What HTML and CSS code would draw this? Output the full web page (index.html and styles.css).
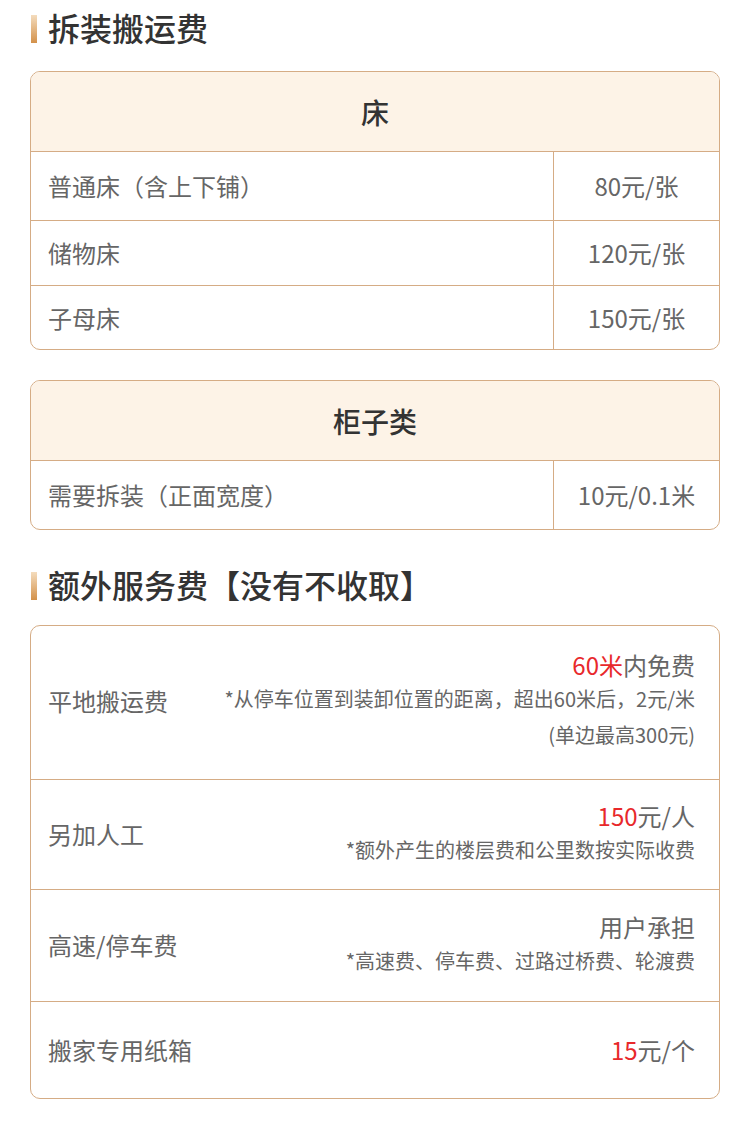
FILE: index.html
```html
<!DOCTYPE html>
<html lang="zh-CN">
<head>
<meta charset="utf-8">
<title>拆装搬运费</title>
<link rel="stylesheet" href="styles.css">
</head>
<body>
<div class="page">
  <h2 class="title title--first"><span class="bar"></span>拆装搬运费</h2>

  <div class="card">
    <div class="card-head">床</div>
    <div class="trow trow--first"><div class="tcell tcell--name">普通床（含上下铺）</div><div class="tcell tcell--price">80元/张</div></div>
    <div class="trow"><div class="tcell tcell--name">储物床</div><div class="tcell tcell--price">120元/张</div></div>
    <div class="trow trow--last"><div class="tcell tcell--name">子母床</div><div class="tcell tcell--price">150元/张</div></div>
  </div>

  <div class="card card--second">
    <div class="card-head">柜子类</div>
    <div class="trow trow--first trow--only"><div class="tcell tcell--name">需要拆装（正面宽度）</div><div class="tcell tcell--price">10元/0.1米</div></div>
  </div>

  <h2 class="title title--second"><span class="bar"></span>额外服务费【没有不收取】</h2>

  <div class="card card--list">
    <div class="srow srow--tall">
      <div class="slabel">平地搬运费</div>
      <div class="sinfo">
        <div class="smain"><span class="red">60米</span>内免费</div>
        <div class="ssub">*从停车位置到装卸位置的距离，超出60米后，2元/米</div>
        <div class="ssub">(单边最高300元)</div>
      </div>
    </div>
    <div class="srow">
      <div class="slabel">另加人工</div>
      <div class="sinfo">
        <div class="smain"><span class="red">150</span>元/人</div>
        <div class="ssub">*额外产生的楼层费和公里数按实际收费</div>
      </div>
    </div>
    <div class="srow srow--third">
      <div class="slabel">高速/停车费</div>
      <div class="sinfo">
        <div class="smain">用户承担</div>
        <div class="ssub">*高速费、停车费、过路过桥费、轮渡费</div>
      </div>
    </div>
    <div class="srow srow--single">
      <div class="slabel">搬家专用纸箱</div>
      <div class="sinfo">
        <div class="smain"><span class="red">15</span>元/个</div>
      </div>
    </div>
  </div>
</div>
</body>
</html>
```

FILE: styles.css
```css
* { box-sizing: border-box; }
html, body { margin: 0; padding: 0; background: #fff; }
body {
  font-family: "Noto Sans CJK SC", "Noto Sans", sans-serif;
  color: #666;
}
.page { padding: 0 30px 20px; }

.title {
  display: flex;
  align-items: center;
  gap: 11px;
  margin: 0;
  font-size: 32px;
  line-height: 40px;
  font-weight: 500;
  color: #333;
}
.title--first { margin-top: 7px; margin-bottom: 24px; }
.title--second { margin-top: 34px; margin-bottom: 21px; }
.bar {
  display: block;
  width: 6px;
  height: 28px;
  margin-left: 1px;
  margin-top: 3px;
  background: linear-gradient(to bottom, #f4dcbd, #d3914a);
}

.card {
  border: 1px solid #d5ac85;
  border-radius: 10px;
  overflow: hidden;
}
.card--second { margin-top: 30px; }

.card-head {
  height: 80px;
  background: #fdf3e7;
  border-bottom: 1px solid #d5ac85;
  display: flex;
  align-items: center;
  justify-content: center;
  font-size: 28px;
  font-weight: 500;
  color: #333;
}

.trow {
  display: grid;
  grid-template-columns: 1fr 166px;
  border-bottom: 1px solid #d5ac85;
  font-size: 24px;
  line-height: 32px;
}
.trow--last, .trow--only { border-bottom: none; }
.tcell {
  display: flex;
  align-items: center;
  padding-top: 16px;
  padding-bottom: 16px;
}
.trow--first .tcell { padding-top: 18px; padding-bottom: 18px; }
.trow--last .tcell { padding-top: 16px; padding-bottom: 15px; }
.tcell--name { padding-left: 17px; }
.tcell--price {
  justify-content: center;
  border-left: 1px solid #d5ac85;
}

.srow {
  display: flex;
  align-items: center;
  justify-content: space-between;
  padding: 20px 24px 21px 17px;
  border-bottom: 1px solid #d5ac85;
}
.srow--tall { padding-top: 23px; padding-bottom: 26px; }
.srow--third { padding-top: 21px; padding-bottom: 22px; }
.srow--single { padding-top: 32px; padding-bottom: 32px; border-bottom: none; }
.slabel {
  font-size: 24px;
  line-height: 32px;
  white-space: nowrap;
}
.sinfo { text-align: right; }
.smain { font-size: 24px; line-height: 32px; }
.ssub { font-size: 20px; line-height: 36px; }
.red { color: #e8282b; }
```
